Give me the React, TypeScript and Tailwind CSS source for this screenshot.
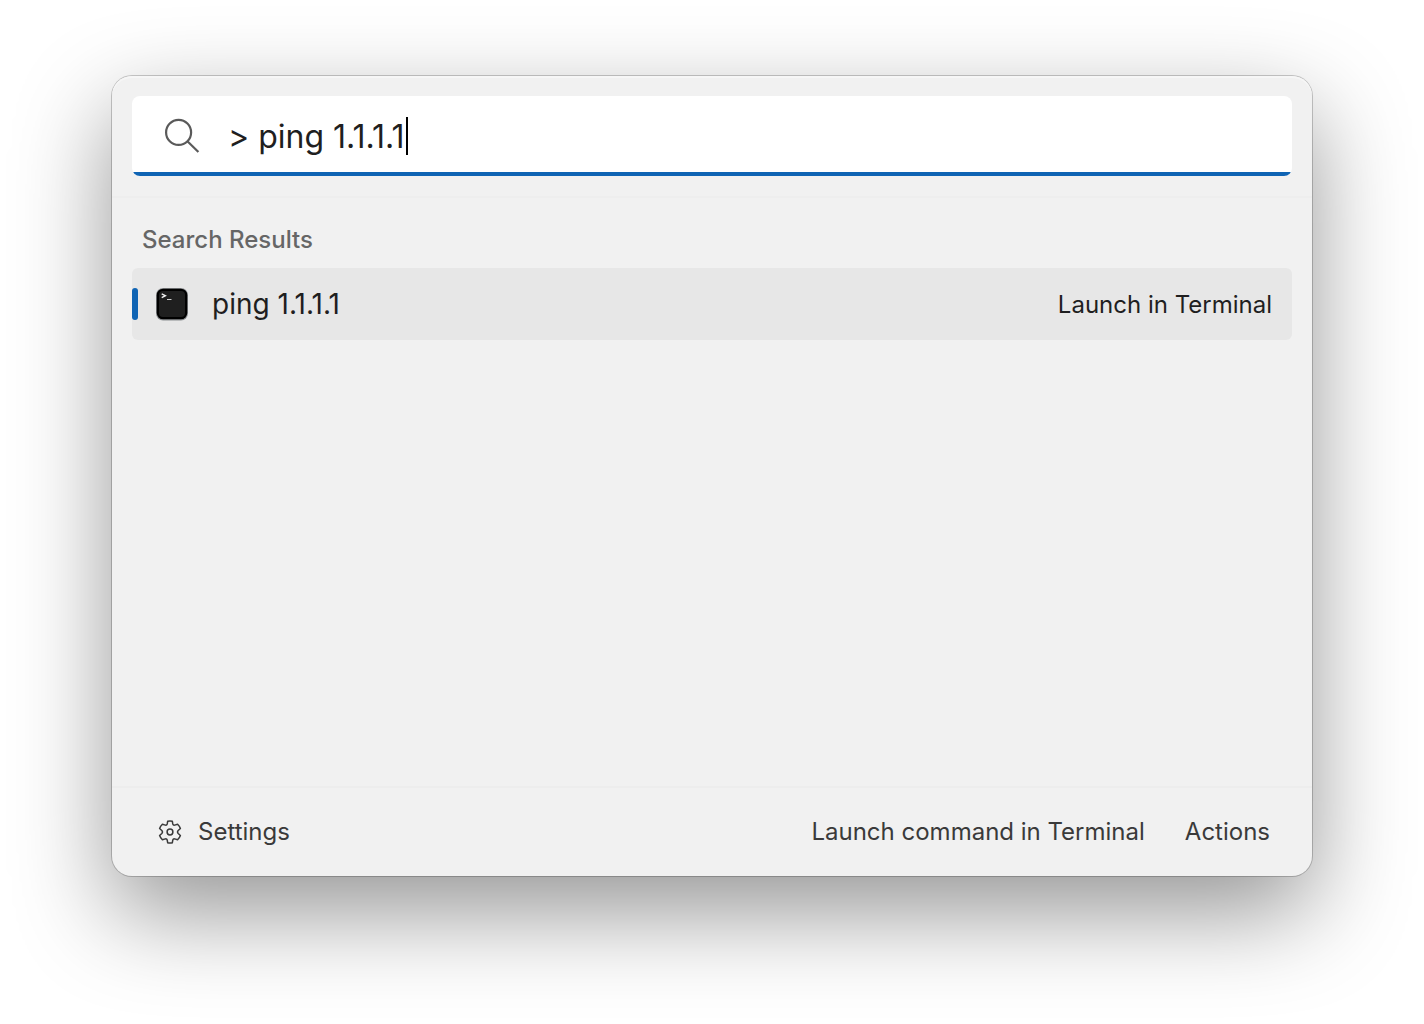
import React, { useState } from "react";

function SearchIcon() {
  return (
    <svg className="size-9 shrink-0" viewBox="0 0 36 36" fill="none" stroke="#5a5a5a" strokeWidth="2.2" aria-hidden="true">
      <circle cx="14.6" cy="14.4" r="12.5" />
      <path d="M23.4 23.2L34.4 34" />
    </svg>
  );
}

function TerminalIcon() {
  return (
    <svg className="size-8 shrink-0 overflow-visible" viewBox="0 0 32 32" fill="none" aria-hidden="true">
      <rect x="0" y="0" width="32" height="32.5" rx="7" fill="#8c8f92" />
      <rect x="0.7" y="0.7" width="30.6" height="30.6" rx="6.5" fill="#000" />
      <rect x="3" y="3" width="26" height="26" rx="4" fill="#1f1f1f" />
      <path d="M5.7 5.8L9.4 7.7L5.7 9.6" stroke="#f2f2f2" strokeWidth="1.4" />
      <path d="M11 11.5H15.5" stroke="#cfcfcf" strokeWidth="1" />
    </svg>
  );
}

function GearIcon() {
  return (
    <svg className="size-6 shrink-0" viewBox="0 0 24 24" fill="none" stroke="#3a3a3a" strokeWidth="1.5" strokeLinejoin="round" aria-hidden="true">
      <path d="M9.7 1.2Q12 .6 14.3 1.2L14.8 4Q15.2 5.4 16.7 5.1L19.6 4.2Q21.5 6 22.4 8.5L20.2 10.5Q18.9 12 20.2 13.5L22.4 15.5Q21.5 18 19.6 19.8L16.7 18.9Q15.2 18.6 14.8 20L14.3 22.8Q12 23.4 9.7 22.8L9.2 20Q8.8 18.6 7.3 18.9L4.4 19.8Q2.5 18 1.6 15.5L3.8 13.5Q5.1 12 3.8 10.5L1.6 8.5Q2.5 6 4.4 4.2L7.3 5.1Q8.8 5.4 9.2 4Z" />
      <circle cx="12" cy="12" r="2.9" />
    </svg>
  );
}

export default function App() {
  const [query, setQuery] = useState("> ping 1.1.1.1");
  return (
    <div className="min-h-screen bg-white px-28 pt-19 pb-37 font-['Inter',sans-serif] text-[#1f1f1f]">
      <main className="flex min-h-[800px] flex-col overflow-hidden rounded-[20px] bg-[#f1f1f1] shadow-[inset_0_2px_0_#f6f6f6,0_0_0_1px_rgba(0,0,0,0.2),0_36px_96px_rgba(0,0,0,0.42)]">
        <header className="border-b-2 border-[#eeeeee] p-5">
          <div className="overflow-hidden rounded-lg bg-white">
            <label className="flex h-19 items-center pt-1 pr-6 pl-8">
              <SearchIcon />
              <input
                type="text"
                aria-label="Search"
                value={query}
                onChange={(e) => setQuery(e.target.value)}
                className="ml-7 h-12 bg-transparent pt-0.5 text-[32px] caret-transparent outline-none [field-sizing:content]"
              />
              <span className="ml-0.5 h-[38px] w-0.5 bg-black" aria-hidden="true" />
            </label>
            <div className="h-1 bg-[#0f64b4]" />
          </div>
        </header>

        <section className="flex-1 px-5 pt-6.5">
          <h2 className="px-2.5 text-2xl font-medium text-[#666666]">Search Results</h2>
          <ul className="mt-3">
            <li>
              <button type="button" className="flex h-18 w-full items-center rounded-md bg-[#e7e7e7] pr-5 text-left">
                <span className="h-8 w-1.5 rounded-[3px] bg-[#0f64b4]" />
                <span className="ml-4.5 flex">
                  <TerminalIcon />
                </span>
                <span className="ml-6 text-[28px]">ping 1.1.1.1</span>
                <span className="ml-auto pt-0.5 text-2xl">Launch in Terminal</span>
              </button>
            </li>
          </ul>
        </section>

        <footer className="flex items-center justify-between border-t-2 border-[#ededed] pt-7 pr-[42px] pb-7 pl-[46px] text-2xl text-[#3a3a3a]">
          <button type="button" className="flex items-center gap-4">
            <GearIcon />
            Settings
          </button>
          <div className="flex gap-10">
            <button type="button">Launch command in Terminal</button>
            <button type="button">Actions</button>
          </div>
        </footer>
      </main>
    </div>
  );
}
